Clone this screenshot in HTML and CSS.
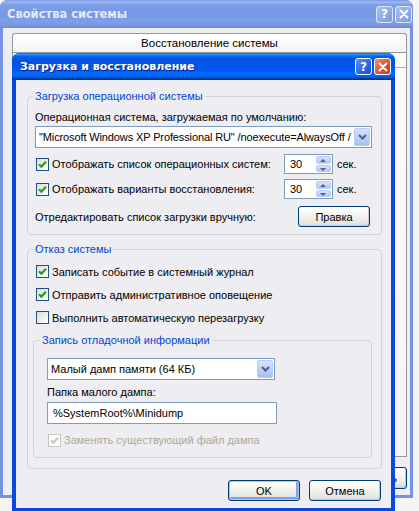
FILE: index.html
```html
<!DOCTYPE html>
<html lang="ru">
<head>
  <meta charset="UTF-8" />
  <title>Загрузка и восстановление</title>
  <link rel="stylesheet" href="styles.css">
</head>
<body>
  <div class="window back-window">
    <div class="titlebar inactive">
      <span class="title">Свойства системы</span>
      <span class="tb-btn tb-help">?</span>
      <span class="tb-btn tb-close">
        <svg width="10" height="10" viewBox="0 0 10 10"><path d="M1.5 1.5 L8.5 8.5 M8.5 1.5 L1.5 8.5" stroke="#fff" stroke-width="2" stroke-linecap="round"/></svg>
      </span>
    </div>
    <div class="back-body">
      <div class="tab">Восстановление системы</div>
      <div class="tab-row"><span class="tab-current"></span></div>
      <div class="tab-panel"></div>
      <div class="back-buttons">
        <button class="btn">Применить</button>
      </div>
    </div>
  </div>

  <div class="window dialog">
    <div class="titlebar">
      <span class="title">Загрузка и восстановление</span>
      <span class="tb-btn tb-help">?</span>
      <span class="tb-btn tb-close">
        <svg width="10" height="10" viewBox="0 0 10 10"><path d="M1.5 1.5 L8.5 8.5 M8.5 1.5 L1.5 8.5" stroke="#fff" stroke-width="2" stroke-linecap="round"/></svg>
      </span>
    </div>

    <div class="dialog-body">
      <fieldset class="group group-boot">
        <legend>Загрузка операционной системы</legend>
        <div class="label-row">Операционная система, загружаемая по умолчанию:</div>
        <div class="select select-os">
          <span class="select-text">"Microsoft Windows XP Professional RU" /noexecute=AlwaysOff /</span>
          <span class="drop">
            <svg width="9" height="6" viewBox="0 0 9 6"><path d="M1 1 L4.5 4.5 L8 1" fill="none" stroke="#4d6185" stroke-width="2"/></svg>
          </span>
        </div>
        <div class="spin-row first">
          <span class="check on">
            <svg width="9" height="9" viewBox="0 0 9 9"><path d="M1 4.2 L3.4 6.6 L8 1.8" fill="none" stroke="#21a121" stroke-width="2.2"/></svg>
          </span>
          <span class="grow">Отображать список операционных систем:</span>
          <span class="spin">
            <span class="spin-val">30</span>
            <span class="spin-btns"><span class="arrow-up"></span><span class="arrow-down"></span></span>
          </span>
          <span class="unit">сек.</span>
        </div>
        <div class="spin-row">
          <span class="check on">
            <svg width="9" height="9" viewBox="0 0 9 9"><path d="M1 4.2 L3.4 6.6 L8 1.8" fill="none" stroke="#21a121" stroke-width="2.2"/></svg>
          </span>
          <span class="grow">Отображать варианты восстановления:</span>
          <span class="spin">
            <span class="spin-val">30</span>
            <span class="spin-btns"><span class="arrow-up"></span><span class="arrow-down"></span></span>
          </span>
          <span class="unit">сек.</span>
        </div>
        <div class="edit-row">
          <span class="grow">Отредактировать список загрузки вручную:</span>
          <button class="btn btn-edit">Правка</button>
        </div>
      </fieldset>

      <fieldset class="group group-fail">
        <legend>Отказ системы</legend>
        <div class="check-row first">
          <span class="check on">
            <svg width="9" height="9" viewBox="0 0 9 9"><path d="M1 4.2 L3.4 6.6 L8 1.8" fill="none" stroke="#21a121" stroke-width="2.2"/></svg>
          </span>
          <span>Записать событие в системный журнал</span>
        </div>
        <div class="check-row">
          <span class="check on">
            <svg width="9" height="9" viewBox="0 0 9 9"><path d="M1 4.2 L3.4 6.6 L8 1.8" fill="none" stroke="#21a121" stroke-width="2.2"/></svg>
          </span>
          <span>Отправить административное оповещение</span>
        </div>
        <div class="check-row">
          <span class="check"></span>
          <span>Выполнить автоматическую перезагрузку</span>
        </div>

        <fieldset class="group group-dump">
          <legend>Запись отладочной информации</legend>
          <div class="select select-dump">
            <span class="select-text">Малый дамп памяти (64 КБ)</span>
            <span class="drop">
              <svg width="9" height="6" viewBox="0 0 9 6"><path d="M1 1 L4.5 4.5 L8 1" fill="none" stroke="#4d6185" stroke-width="2"/></svg>
            </span>
          </div>
          <div class="label-row dump-label">Папка малого дампа:</div>
          <div class="textbox">%SystemRoot%\Minidump</div>
          <div class="check-row disabled">
            <span class="check on">
              <svg width="9" height="9" viewBox="0 0 9 9"><path d="M1 4.2 L3.4 6.6 L8 1.8" fill="none" stroke="#cac8bb" stroke-width="2.2"/></svg>
            </span>
            <span>Заменять существующий файл дампа</span>
          </div>
        </fieldset>
      </fieldset>

      <div class="dialog-buttons">
        <button class="btn btn-default">OK</button>
        <button class="btn">Отмена</button>
      </div>
    </div>
  </div>
</body>
</html>
```

FILE: styles.css
```css
body {
  margin: 0;
  width: 419px;
  height: 511px;
  overflow: hidden;
  position: relative;
  background-color: #f4f4f6;
  font-family: "Liberation Sans", Arial, sans-serif;
  font-size: 11px;
  line-height: 14px;
  color: #000;
}

/* windows */
.window {
  position: absolute;
  box-sizing: border-box;
  display: flex;
  flex-direction: column;
  border-radius: 8px 8px 0 0;
}

.back-window {
  left: 0;
  top: 0;
  width: 413px;
  height: 498px;
  padding: 0 3px 3px 3px;
  background-color: #7493e2;
}

.dialog {
  left: 12px;
  top: 53px;
  width: 383px;
  height: 458px;
  padding: 0 4px 3px 4px;
  background-color: #0b48dd;
}

.titlebar {
  height: 27px;
  margin: 0 -4px;
  padding: 0 4px 0 8px;
  display: flex;
  align-items: center;
  border-radius: 7px 7px 0 0;
  background: linear-gradient(to bottom, #0058ee 0%, #3593ff 4%, #288eff 6%, #127dff 8%, #036ffc 10%, #0262ee 14%, #0057e5 20%, #0054e3 24%, #0055eb 56%, #005bf5 66%, #026afe 76%, #0062ef 86%, #0052d6 92%, #0040ab 94%, #003092 100%);
}

.titlebar.inactive {
  height: 28px;
  margin: 0 -3px;
  padding: 0 1px 0 7px;
  background: linear-gradient(to bottom, #7697e7 0%, #93afed 5%, #9ab6ef 8%, #84a4ea 14%, #7b9ce6 20%, #7997e3 50%, #7e9fe8 75%, #7a98e4 90%, #6e89d6 100%);
}

.title {
  flex: 1;
  color: #fff;
  font-family: "DejaVu Sans", sans-serif;
  font-weight: bold;
  font-size: 11px;
  text-shadow: 1px 1px #0f1a8a;
}

.inactive .title {
  color: #e4eafb;
  font-size: 11.5px;
  text-shadow: none;
}

.tb-btn {
  width: 15px;
  height: 15px;
  margin-left: 2px;
  border: 1px solid #fff;
  border-radius: 3px;
  display: flex;
  align-items: center;
  justify-content: center;
  color: #fff;
  font-family: "DejaVu Sans", sans-serif;
  font-weight: bold;
  font-size: 12px;
  background: linear-gradient(135deg, #5a8ff8, #2a63e6 60%, #1c4fd2);
}

.tb-close {
  background: linear-gradient(135deg, #f0936e, #e0512d 55%, #c73a16);
}

.inactive .tb-btn {
  border-color: #dfe7fb;
  background: linear-gradient(135deg, #a7bff5, #8aa7ec 60%, #7f9de6);
}

/* back window */
.back-body {
  flex: 1;
  display: flex;
  flex-direction: column;
  padding: 5px 3px 6px 9px;
  background-color: #eeedf1;
}

.tab {
  height: 18px;
  border: 1px solid #919b9c;
  border-bottom: none;
  border-radius: 3px 3px 0 0;
  background: linear-gradient(#ffffff, #f4f4f2);
  text-align: center;
  line-height: 19px;
  font-size: 11.5px;
}

.tab-row {
  height: 15px;
  display: flex;
  justify-content: flex-end;
  border: 1px solid #919b9c;
  border-bottom: none;
  background-color: #fcfcfd;
}

.tab-current {
  width: 13px;
  margin-top: 14px;
  border-top: 2px solid #f3a33a;
}

.tab-panel {
  flex: 1;
  border: 1px solid #919b9c;
  border-top: none;
  background: linear-gradient(#fbfbfd, #f5f5f8);
}

.back-buttons {
  display: flex;
  justify-content: flex-end;
  margin-top: 10px;
}

.back-buttons .btn {
  width: 77px;
  height: 22px;
}

/* dialog */
.dialog-body {
  flex: 1;
  padding: 9px 9px 0 11px;
  background-color: #eeedf1;
}

.group {
  margin: 0;
  padding: 0 9px 7px 7px;
  border: 1px solid #d3d2d6;
  border-radius: 4px;
  min-width: 0;
}

.group legend {
  color: #0046d5;
  padding: 0 2px;
  margin-left: -2px;
  line-height: 14px;
}

.group-fail {
  margin-top: 7px;
  padding-bottom: 10px;
}

.group-dump {
  margin: 4px 0 0 -2px;
  padding: 0 13px 7px 13px;
}

.group-dump legend {
  margin-left: -7px;
}

.label-row {
  margin-top: 7px;
  height: 14px;
}

.dump-label {
  margin-top: 5px;
}

.grow {
  flex: 1;
}

.select {
  height: 22px;
  box-sizing: border-box;
  border: 1px solid #7f9db9;
  background-color: #fff;
  display: flex;
  align-items: stretch;
  padding: 1px;
}

.select-os {
  margin-top: 2px;
}

.select-os .select-text {
  letter-spacing: -0.12px;
}

.select-dump {
  margin-top: 11px;
  width: 228px;
}

.select-text {
  flex: 1;
  padding-left: 2px;
  line-height: 18px;
  white-space: nowrap;
  overflow: hidden;
}

.drop {
  width: 16px;
  flex-shrink: 0;
  box-sizing: border-box;
  border: 1px solid #b8ccf8;
  border-radius: 2px;
  background: linear-gradient(#d6e2fc, #b8cdf9 60%, #a7bff4);
  display: flex;
  align-items: center;
  justify-content: center;
}

.textbox {
  margin-top: 3px;
  width: 230px;
  height: 22px;
  box-sizing: border-box;
  border: 1px solid #7f9db9;
  background-color: #fff;
  padding-left: 5px;
  line-height: 20px;
}

/* checkboxes */
.check-row,
.spin-row {
  display: flex;
  align-items: center;
}

.check-row {
  height: 23px;
}

.check-row.first {
  margin-top: 4px;
}

.check-row.disabled {
  margin-top: 6px;
  height: 20px;
  color: #aca899;
}

.check {
  width: 13px;
  height: 13px;
  box-sizing: border-box;
  margin: 0 3px 0 1px;
  border: 1px solid #1c5180;
  background: linear-gradient(135deg, #dcdcd7, #ffffff);
  display: flex;
  align-items: center;
  justify-content: center;
}

.disabled .check {
  border-color: #cac8bb;
  background: #fff;
}

/* spinners */
.spin-row {
  height: 22px;
  margin-top: 3px;
}

.spin-row.first {
  margin-top: 5px;
}

.spin {
  width: 49px;
  height: 20px;
  box-sizing: border-box;
  border: 1px solid #7f9db9;
  background-color: #fff;
  display: flex;
  padding: 1px;
}

.spin-val {
  flex: 1;
  padding-left: 4px;
  line-height: 16px;
}

.spin-btns {
  width: 15px;
  display: flex;
  flex-direction: column;
  gap: 1px;
}

.arrow-up,
.arrow-down {
  flex: 1;
  border: 1px solid #b8ccf8;
  border-radius: 2px;
  background: linear-gradient(#d6e2fc, #b3c8f7);
  position: relative;
}

.arrow-up::after,
.arrow-down::after {
  content: "";
  position: absolute;
  left: 3px;
  border-left: 3.5px solid transparent;
  border-right: 3.5px solid transparent;
}

.arrow-up::after {
  top: 2px;
  border-bottom: 3px solid #4d6185;
}

.arrow-down::after {
  top: 2px;
  border-top: 3px solid #4d6185;
}

.unit {
  width: 35px;
  margin-left: 4px;
}

.edit-row {
  display: flex;
  align-items: center;
  height: 21px;
  margin-top: 6px;
}

/* buttons */
.btn {
  width: 72px;
  height: 21px;
  padding: 0;
  border: 1px solid #003c74;
  border-radius: 3px;
  background: linear-gradient(#ffffff, #f3f3ef 45%, #e6e5e0 85%, #cdd3e2);
  box-shadow: inset -1px -1px 0 #c3cad9;
  font-family: inherit;
  font-size: 11px;
  color: #000;
}

.btn-edit {
  margin-right: 2px;
}

.btn-default {
  box-shadow: inset 0 0 0 1px #a9c4f4, inset -1px -1px 0 2px #7fa4ec;
}

.dialog-buttons {
  display: flex;
  justify-content: flex-end;
  gap: 9px;
  margin-top: 11px;
  padding-right: 1px;
}
```
